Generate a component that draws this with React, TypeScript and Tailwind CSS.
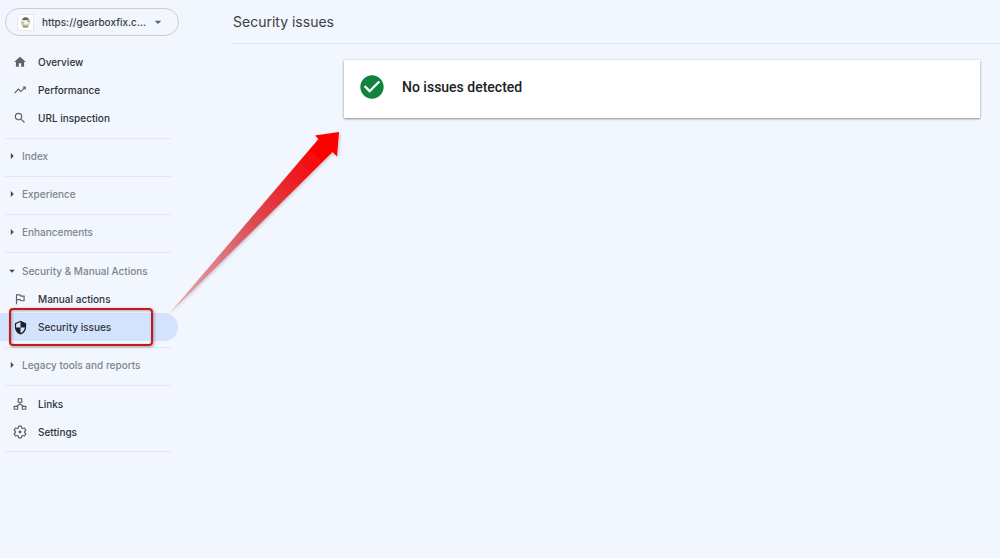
import React from 'react';
import clsx from 'clsx';
import { MdArrowDropDown, MdArrowRight, MdCheckCircle, MdHome, MdOutlinedFlag, MdSearch, MdTrendingUp } from 'react-icons/md';

interface NavItemProps {
    label: string;
    icon: React.ReactNode;
    active?: boolean;
}

function ShieldIcon() {
    return (
        <svg viewBox="0 0 24 24" className="h-[15px] w-[15px] shrink-0" fill="#202124" aria-hidden="true">
            <path d="M12 1 3 5v6c0 5.55 3.84 10.74 9 12 5.16-1.26 9-6.45 9-12V5l-9-4zm0 10.99h7c-.53 4.12-3.28 7.79-7 8.94V12H5V6.3l7-3.11v8.8z" />
        </svg>
    );
}

function LinksIcon() {
    return (
        <svg viewBox="0 0 24 24" className="h-[14px] w-[14px]" fill="none" stroke="currentColor" strokeWidth="2" aria-hidden="true">
            <path d="M9 3h6v6H9zM2 16h6v5H2zM16 16h6v5h-6zM12 9v4M12 12l-6 4M12 12l6 4" />
        </svg>
    );
}

function GearIcon() {
    return (
        <svg viewBox="0 0 24 24" className="h-[14px] w-[14px]" fill="none" stroke="currentColor" strokeWidth="2" strokeLinejoin="round" aria-hidden="true">
            <path d="M9.7 2h4.6l.6 3 1.9 1.1 2.9-1 2.3 4-2.3 2v1.8l2.3 2-2.3 4-2.9-1-1.9 1.1-.6 3H9.7l-.6-3-1.9-1.1-2.9 1-2.3-4 2.3-2v-1.8l-2.3-2 2.3-4 2.9 1L9.1 5z" />
            <circle cx="12" cy="12" r="2.4" fill="currentColor" stroke="none" />
        </svg>
    );
}

function SiteIcon() {
    return (
        <svg viewBox="0 0 16 16" className="h-[17px] w-[17px] shrink-0 border border-[#e8e8ea] bg-white" aria-hidden="true">
            <path d="M4 5C5 3 7 2.500 8 2.500s3.500.5 4 2.500L10 5.500H6z" fill="#6b6a5e" />
            <path d="M3 6.500h3l1 1.500h6L12 10l-2 2.500H6L3.500 10z" fill="#d3c69a" />
            <path d="M6 7h5v3H7z" fill="#f4f1e6" />
            <path d="M4.500 11.200 8 12l3.500-.8-1.200 2H5.700z" fill="#8a8470" />
            <path d="M10 6.500h3" stroke="#55616e" />
        </svg>
    );
}

function NavItem({ label, icon, active }: NavItemProps) {
    return (
        <li className="relative">
            <a
                href="#"
                aria-current={active ? 'page' : undefined}
                className={clsx('flex h-7 items-center gap-[11px] rounded-r-full pl-[13px]', active && 'bg-[#d3e3fd]')}
            >
                <span className="flex h-[14px] w-[14px] items-center justify-center text-[#5f6368]">{icon}</span>
                <span className="text-[#303236]">{label}</span>
            </a>
            {active && (
                <div className="pointer-events-none absolute -top-[5px] right-[25px] -bottom-[5px] left-[9px] rounded border-2 border-[#c9161c] shadow-[1px_1px_3px_rgba(0,0,0,0.35),inset_1px_1px_3px_rgba(0,0,0,0.3)]" />
            )}
        </li>
    );
}

function NavSection({ label, children }: { label: string; children?: React.ReactNode }) {
    const open = Boolean(children);
    return (
        <section className="pb-1.5">
            <div className="mr-[7px] ml-[5px] border-t border-[#e3e6ee]" />
            <button
                type="button"
                aria-expanded={open}
                className={clsx('flex h-7 items-center gap-[3px] pl-[5px] text-[#80858b]', open ? 'mt-1' : 'mt-[3px]')}
            >
                {open ? <MdArrowDropDown className="h-[14px] w-[14px] text-[#45484c]" /> : <MdArrowRight className="h-[14px] w-[14px] text-[#45484c]" />}
                {label}
            </button>
            {children && <ul>{children}</ul>}
        </section>
    );
}

function Pointer() {
    return (
        <svg viewBox="0 0 180 192" className="pointer-events-none absolute top-[126px] left-[165px] h-[192px] w-[180px]" aria-hidden="true">
            <defs>
                <linearGradient id="pointerFill" gradientUnits="userSpaceOnUse" x1="5" y1="187" x2="174" y2="6">
                    <stop offset="0" stopColor="#e08088" stopOpacity="0.6" />
                    <stop offset="0.25" stopColor="#dc7880" stopOpacity="0.9" />
                    <stop offset="0.5" stopColor="#dc4a50" />
                    <stop offset="0.75" stopColor="#ee1c20" />
                    <stop offset="0.9" stopColor="#ff0000" />
                </linearGradient>
                <filter id="pointerShadow" x="-10%" y="-10%" width="120%" height="120%">
                    <feDropShadow dx="1" dy="1" stdDeviation="1.5" floodOpacity="0.22" />
                </filter>
            </defs>
            <path d="M4 188 153.500 13 150 9.500 174 6 172 30.500 167.500 26z" fill="url(#pointerFill)" filter="url(#pointerShadow)" />
        </svg>
    );
}

export default function App() {
    return (
        <div className="relative flex min-h-screen bg-[#f2f6fe] font-[Inter,sans-serif] text-[10px] font-medium">
            <aside className="w-[178px] shrink-0 pt-2">
                <button
                    type="button"
                    className="ml-[5px] flex h-7 w-[174px] items-center rounded-full border border-[#c9ccd3] pl-[11px] text-[#3c4043]"
                >
                    <SiteIcon />
                    <span className="ml-2">https://gearboxfix.c...</span>
                    <MdArrowDropDown className="mr-3 ml-auto h-4 w-4 text-[#5f6368]" />
                </button>
                <nav className="mt-3">
                    <ul className="pb-1.5">
                        <NavItem label="Overview" icon={<MdHome className="h-[14px] w-[14px]" />} />
                        <NavItem label="Performance" icon={<MdTrendingUp className="h-[14px] w-[14px]" />} />
                        <NavItem label="URL inspection" icon={<MdSearch className="h-[14px] w-[14px]" />} />
                    </ul>
                    <NavSection label="Index" />
                    <NavSection label="Experience" />
                    <NavSection label="Enhancements" />
                    <NavSection label="Security & Manual Actions">
                        <NavItem label="Manual actions" icon={<MdOutlinedFlag className="h-[14px] w-[14px]" />} />
                        <NavItem label="Security issues" icon={<ShieldIcon />} active />
                    </NavSection>
                    <NavSection label="Legacy tools and reports" />
                    <div className="mr-[7px] ml-[5px] border-y border-[#e3e6ee] pt-1 pb-[5px]">
                        <ul className="-ml-[5px]">
                            <NavItem label="Links" icon={<LinksIcon />} />
                            <NavItem label="Settings" icon={<GearIcon />} />
                        </ul>
                    </div>
                </nav>
            </aside>

            <main className="ml-[53px] flex-1">
                <header className="flex h-11 items-center border-b border-[#e1e5ee] pl-0.5">
                    <h1 className="text-sm font-normal text-[#3c4043]">Security issues</h1>
                </header>
                <div className="mt-4 mr-5 ml-[113px] flex items-center gap-4 bg-white pt-[13px] pr-4 pb-[17px] pl-[14px] shadow-[0_1px_2px_rgba(0,0,0,0.4),0_0_3px_rgba(0,0,0,0.1)]">
                    <MdCheckCircle className="h-7 w-7 text-[#12823f]" />
                    <h2 className="font-[Roboto,sans-serif] text-sm font-medium text-[#202124]">No issues detected</h2>
                </div>
            </main>
            <Pointer />
        </div>
    );
}
